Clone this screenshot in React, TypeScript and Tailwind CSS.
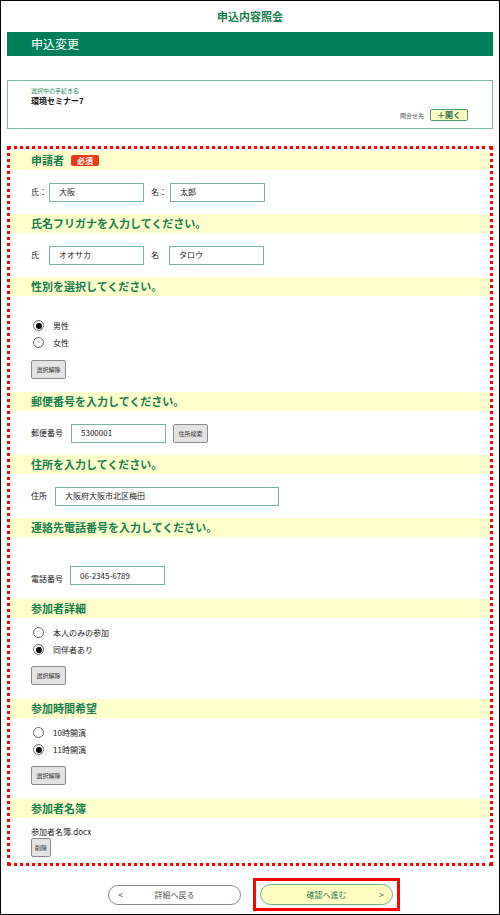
import React from "react";

const green = "text-[#15804f]";

const Heading = ({ title, required }: { title: string; required?: boolean }) => (
  <div className="flex h-[19px] items-center gap-[7px] bg-[#ffffcc] pl-[21px]">
    <span className={`text-[11px] font-bold leading-none ${green}`}>{title}</span>
    {required && (
      <span className="flex h-[11px] w-[28px] items-center justify-center rounded-[2px] bg-[#ea3a18] text-[8px] font-bold leading-none text-white">
        必須
      </span>
    )}
  </div>
);

const Field = ({ value, w }: { value: string; w: string }) => (
  <div className={`flex h-[19px] items-center border border-[#76b3a2] bg-white pl-[9px] text-[8px] text-[#222] ${w}`}>
    {value}
  </div>
);

const SmallButton = ({ label, w = "w-[35px]" }: { label: string; w?: string }) => (
  <div
    className={`flex h-[19px] items-center justify-center rounded-[2px] border border-[#8a8a8a] bg-[#e3e3e3] text-[6px] text-[#333] ${w}`}
  >
    {label}
  </div>
);

const Radio = ({ label, checked }: { label: string; checked?: boolean }) => (
  <div className="flex h-[17px] items-center">
    <span className="flex h-[11px] w-[11px] items-center justify-center rounded-full border border-[#666] bg-white">
      {checked && <span className="h-[6px] w-[6px] rounded-full bg-black" />}
    </span>
    <span className="ml-[9px] text-[8px] text-[#222]">{label}</span>
  </div>
);

export default function App() {
  return (
    <div
      className="h-[915px] w-[500px] overflow-hidden border border-black bg-white"
      style={{ fontFamily: '"Noto Sans CJK JP", "Noto Sans", sans-serif' }}
    >
      <div className={`flex h-[31px] items-center justify-center text-[11px] font-bold ${green}`}>
        申込内容照会
      </div>
      <div className="mx-[6px] flex h-[24px] items-center bg-[#00805a] pl-[24px] text-[12px] text-white">
        申込変更
      </div>

      <div className="mx-[6px] mt-[24px] h-[49px] border border-[#79b8a2] px-[23px] pt-[5px]">
        <div className="text-[6px] leading-[9px] text-[#2e8a62]">選択中の手続き名</div>
        <div className="text-[8px] font-bold leading-[12px] text-[#111]">環境セミナー7</div>
        <div className="mt-[2px] flex items-center justify-end gap-[6px] pr-[1px]">
          <span className="text-[6px] text-[#555]">問合せ先</span>
          <span className="flex h-[12px] w-[38px] items-center justify-center rounded-[2px] border border-[#4f9a72] bg-[#ffffc4] text-[8px] font-bold leading-none text-[#1c6b3f]">
            ＋開く
          </span>
        </div>
      </div>

      <div className="mx-[6px] mt-[17px] h-[720px] border-[3px] border-dotted border-[#ff0000] pt-[2px]">
        <Heading title="申請者" required />
        <div className="flex h-[44px] items-center pl-[21px] text-[8px] text-[#222]">
          <span className="w-[18px]">氏：</span>
          <Field value="大阪" w="w-[95px]" />
          <span className="ml-[7px] w-[19px]">名：</span>
          <Field value="太郎" w="w-[95px]" />
        </div>

        <Heading title="氏名フリガナを入力してください。" />
        <div className="flex h-[44px] items-center pl-[21px] text-[8px] text-[#222]">
          <span className="w-[18px]">氏</span>
          <Field value="オオサカ" w="w-[95px]" />
          <span className="ml-[7px] w-[18px]">名</span>
          <Field value="タロウ" w="w-[95px]" />
        </div>

        <Heading title="性別を選択してください。" />
        <div className="h-[96px] pl-[23px] pt-[21px]">
          <Radio label="男性" checked />
          <Radio label="女性" />
          <div className="-ml-[2px] mt-[9px]">
            <SmallButton label="選択解除" />
          </div>
        </div>

        <Heading title="郵便番号を入力してください。" />
        <div className="flex h-[44px] items-center pl-[21px] text-[8px] text-[#222]">
          <span className="w-[40px]">郵便番号</span>
          <Field value="5300001" w="w-[95px]" />
          <div className="ml-[7px]">
            <SmallButton label="住所検索" />
          </div>
        </div>

        <Heading title="住所を入力してください。" />
        <div className="flex h-[44px] items-center pl-[21px] text-[8px] text-[#222]">
          <span className="w-[24px]">住所</span>
          <Field value="大阪府大阪市北区梅田" w="w-[224px]" />
        </div>

        <Heading title="連絡先電話番号を入力してください。" />
        <div className="flex h-[62px] items-end pb-[14px] pl-[21px] text-[8px] text-[#222]">
          <span className="w-[39px]">電話番号</span>
          <Field value="06-2345-6789" w="w-[95px]" />
        </div>

        <Heading title="参加者詳細" />
        <div className="h-[81px] pl-[23px] pt-[6px]">
          <Radio label="本人のみの参加" />
          <Radio label="同伴者あり" checked />
          <div className="-ml-[2px] mt-[8px]">
            <SmallButton label="選択解除" />
          </div>
        </div>

        <Heading title="参加時間希望" />
        <div className="h-[81px] pl-[23px] pt-[6px]">
          <Radio label="10時開演" />
          <Radio label="11時開演" checked />
          <div className="-ml-[2px] mt-[8px]">
            <SmallButton label="選択解除" />
          </div>
        </div>

        <Heading title="参加者名簿" />
        <div className="pl-[21px] pt-[8px]">
          <div className="text-[8px] leading-[12px] text-[#222]">参加者名簿.docx</div>
          <SmallButton label="削除" w="w-[20px]" />
        </div>
      </div>

      <div className="mt-[12px] flex items-center justify-center gap-[12px] pl-[8px]">
        <div className="relative flex h-[20px] w-[133px] items-center justify-center rounded-full border border-[#8c8c8c] bg-white text-[8px] text-[#555]">
          <span className="absolute left-[9px] text-[9px]">&lt;</span>
          詳細へ戻る
        </div>
        <div className="border-[3px] border-[#ff0000] px-[4px] py-[3px]">
          <div className="relative flex h-[21px] w-[133px] items-center justify-center rounded-full border border-[#6cb38c] bg-[#ffffc2] text-[8px] text-[#2b7a4f]">
            確認へ進む
            <span className="absolute right-[8px] text-[9px]">&gt;</span>
          </div>
        </div>
      </div>
    </div>
  );
}
